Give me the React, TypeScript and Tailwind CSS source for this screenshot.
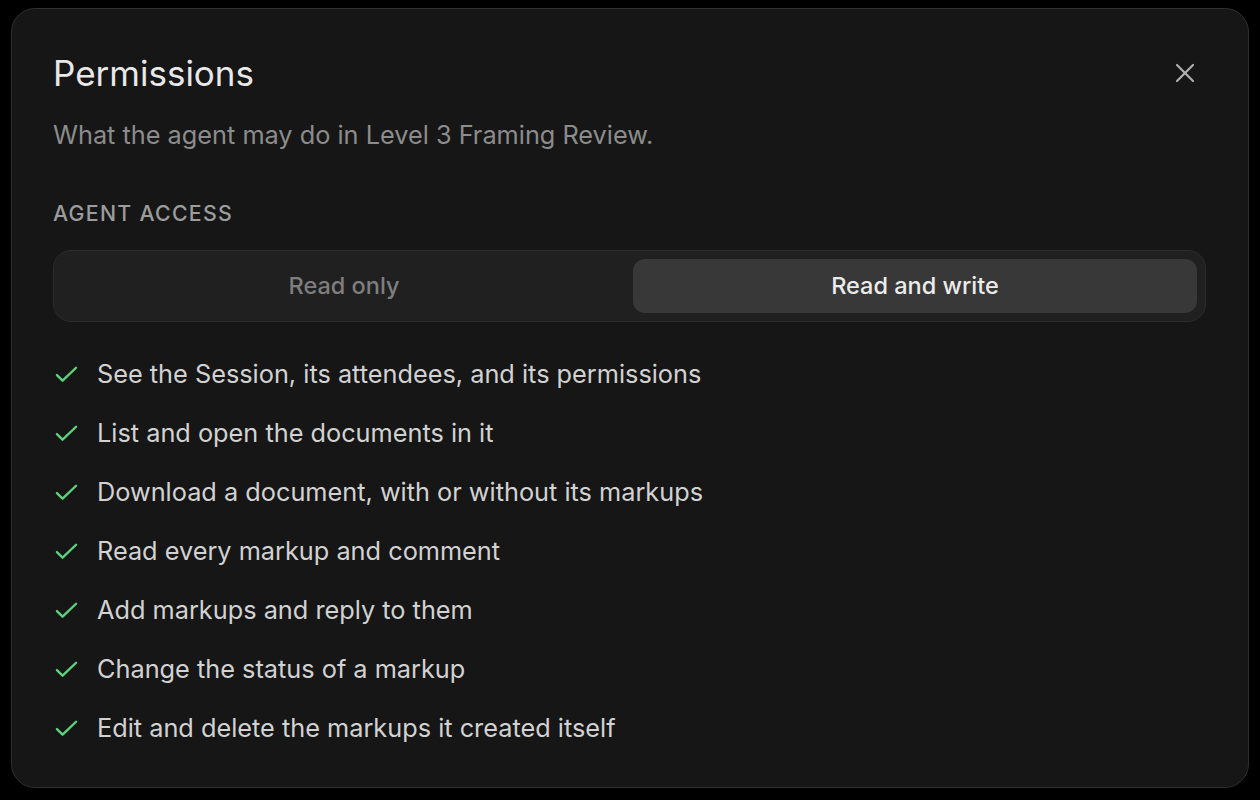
import { X } from "lucide-react";

const items = [
  "See the Session, its attendees, and its permissions",
  "List and open the documents in it",
  "Download a document, with or without its markups",
  "Read every markup and comment",
  "Add markups and reply to them",
  "Change the status of a markup",
  "Edit and delete the markups it created itself",
];

function Check() {
  return (
    <svg width="27" height="27" viewBox="0 0 24 24" fill="none" stroke="#5bd27c" strokeWidth="2.1" strokeLinecap="round" strokeLinejoin="round" className="shrink-0">
      <path d="M3.5 12.5l5 5L20.5 6" />
    </svg>
  );
}

export default function App() {
  return (
    <div className="min-h-screen bg-black pl-[11px] pr-[11px] pt-[8px] font-['Inter','Noto_Sans',sans-serif]">
      <div className="h-[780px] rounded-[24px] border-[1.5px] border-[#2f2f2f] bg-[#161616] px-[41px] pt-[44px]">
        {/* header */}
        <div className="flex items-start justify-between">
          <h2 className="text-[35px] leading-[40px] font-normal text-[#e8e8e8]">Permissions</h2>
          <button className="mr-[6px] mt-[4px] text-[#b0b0b0]">
            <X size={32} strokeWidth={1.6} />
          </button>
        </div>
        <p className="mt-[27px] text-[25.3px] leading-[30px] text-[#8c8c8c]">
          What the agent may do in Level 3 Framing Review.
        </p>

        {/* access */}
        <div className="mt-[50px] text-[21.3px] leading-[26px] font-medium uppercase tracking-[0.06em] text-[#9c9c9c]">
          Agent access
        </div>
        <div className="mt-[24px] mr-[1px] grid grid-cols-2 gap-[7px] rounded-[18px] border-[1.5px] border-[#2c2c2c] bg-[#202020] p-[8px]">
          <button className="h-[54px] rounded-[12px] text-[23.5px] font-medium text-[#7e7e7e]">Read only</button>
          <button className="h-[54px] rounded-[12px] bg-[#383838] text-[23.5px] font-medium text-[#ececec]">Read and write</button>
        </div>

        {/* list */}
        <ul className="mt-[35px] flex flex-col gap-[25px]">
          {items.map((t) => (
            <li key={t} className="flex items-center gap-[17px] text-[25.3px] leading-[34px] text-[#d2d2d2]">
              <Check />
              <span>{t}</span>
            </li>
          ))}
        </ul>
      </div>
    </div>
  );
}
